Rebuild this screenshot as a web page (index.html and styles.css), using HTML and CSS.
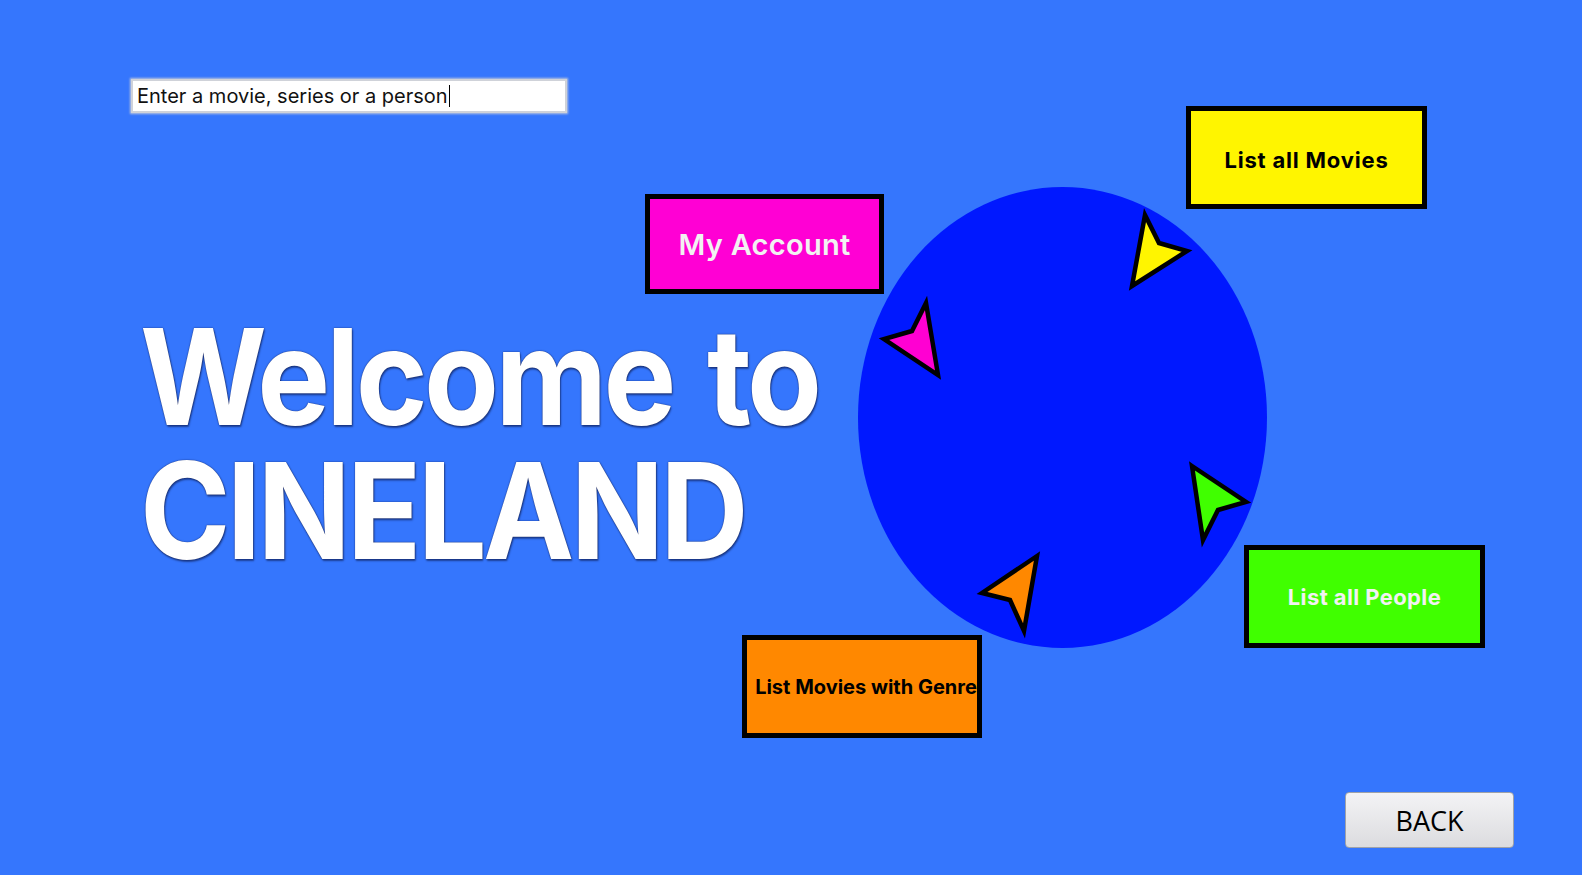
FILE: index.html
```html
<!DOCTYPE html>
<html lang="en">
<head>
<meta charset="utf-8">
<title>CINELAND</title>
<link rel="stylesheet" href="styles.css">
</head>
<body>
<main class="stage">
  <section class="intro">
    <div class="search"><span class="search-text">Enter a movie, series or a person</span><span class="caret"></span></div>
    <h1 class="title">Welcome to<br>CINELAND</h1>
  </section>

  <div class="hub">
    <div class="disc"></div>
    <svg class="pointers" width="1582" height="875" viewBox="0 0 1582 875">
      <polygon class="ptr ptr-yellow" points="1145,215 1159,243 1187,251 1132,286"/>
      <polygon class="ptr ptr-magenta" points="926,303 912,331 884,339 938,375"/>
      <polygon class="ptr ptr-green" points="1192,466 1246,502 1218,510 1203,540"/>
      <polygon class="ptr ptr-orange" points="1037,556 982,593 1010,600 1024,631"/>
    </svg>
    <button class="tile tile-account">My Account</button>
    <button class="tile tile-movies">List all Movies</button>
    <button class="tile tile-people">List all People</button>
    <button class="tile tile-genre">List Movies with Genre</button>
  </div>

  <button class="back">BACK</button>
</main>
</body>
</html>
```

FILE: styles.css
```css
html, body {
  margin: 0;
  padding: 0;
}

body {
  background: #3576fd;
  font-family: Inter, "Noto Sans", sans-serif;
}

.stage {
  position: relative;
  width: 1582px;
  height: 875px;
  overflow: hidden;
}

.intro {
  padding: 79px 0 0 131px;
  display: flex;
  flex-direction: column;
  align-items: flex-start;
}

.search {
  box-sizing: border-box;
  width: 436px;
  height: 34px;
  background: #ffffff;
  border: 2px solid #cfd2d9;
  box-shadow: 0 0 2px 1px rgba(200, 205, 218, 0.9);
  display: flex;
  align-items: center;
  padding-left: 4px;
  font-family: Inter, sans-serif;
  font-size: 20px;
  color: #111;
}

.caret {
  display: inline-block;
  width: 1px;
  height: 22px;
  background: #000;
  margin-left: 1px;
}

.title {
  margin: 196px 0 0 9px;
  font-family: Inter, sans-serif;
  font-weight: 700;
  font-size: 132px;
  line-height: 132px;
  letter-spacing: -4px;
  word-spacing: 10px;
  color: #ffffff;
  transform: scale(0.927, 1.015);
  transform-origin: left top;
  text-shadow: 0 0 1.5px rgba(0, 0, 40, 0.85), 1px 2px 2px rgba(0, 0, 30, 0.45);
}

.hub {
  position: absolute;
  inset: 0;
  pointer-events: none;
}

.disc {
  position: absolute;
  left: 858px;
  top: 187px;
  width: 409px;
  height: 461px;
  border-radius: 50%;
  background: #0018ff;
}

.pointers {
  position: absolute;
  left: 0;
  top: 0;
}

.ptr {
  stroke: #000;
  stroke-width: 4.5;
  stroke-linejoin: miter;
}
.ptr-yellow { fill: #fff500; }
.ptr-magenta { fill: #ff00d2; }
.ptr-green { fill: #40ff00; }
.ptr-orange { fill: #ff8800; }

.tile {
  position: absolute;
  box-sizing: border-box;
  width: 241px;
  height: 103px;
  border: 5px solid #000;
  display: flex;
  align-items: center;
  justify-content: center;
  padding: 0;
  font-family: Inter, sans-serif;
  font-weight: 700;
  font-size: 22px;
  letter-spacing: 0.8px;
  white-space: nowrap;
  color: #000;
}

.tile-account {
  left: 645px;
  top: 194px;
  width: 239px;
  height: 100px;
  background: #ff00d4;
  color: #f2f2f2;
  font-weight: 600;
  font-size: 29px;
  letter-spacing: 0.3px;
}

.tile-movies {
  left: 1186px;
  top: 106px;
  padding-top: 4px;
  background: #fff500;
}

.tile-people {
  left: 1244px;
  top: 545px;
  background: #40ff00;
  color: #f2f2f2;
  letter-spacing: 0.4px;
}

.tile-genre {
  left: 742px;
  top: 635px;
  width: 240px;
  padding-left: 8px;
  background: #ff8800;
  font-size: 20px;
  letter-spacing: 0;
}

.back {
  position: absolute;
  left: 1345px;
  top: 792px;
  width: 169px;
  height: 56px;
  box-sizing: border-box;
  border: 1px solid #9fa2a8;
  border-radius: 4px;
  background: linear-gradient(#f3f3f5, #dcdcdf);
  font-family: "Open Sans", sans-serif;
  font-size: 27px;
  color: #000;
  padding: 0;
}
```
